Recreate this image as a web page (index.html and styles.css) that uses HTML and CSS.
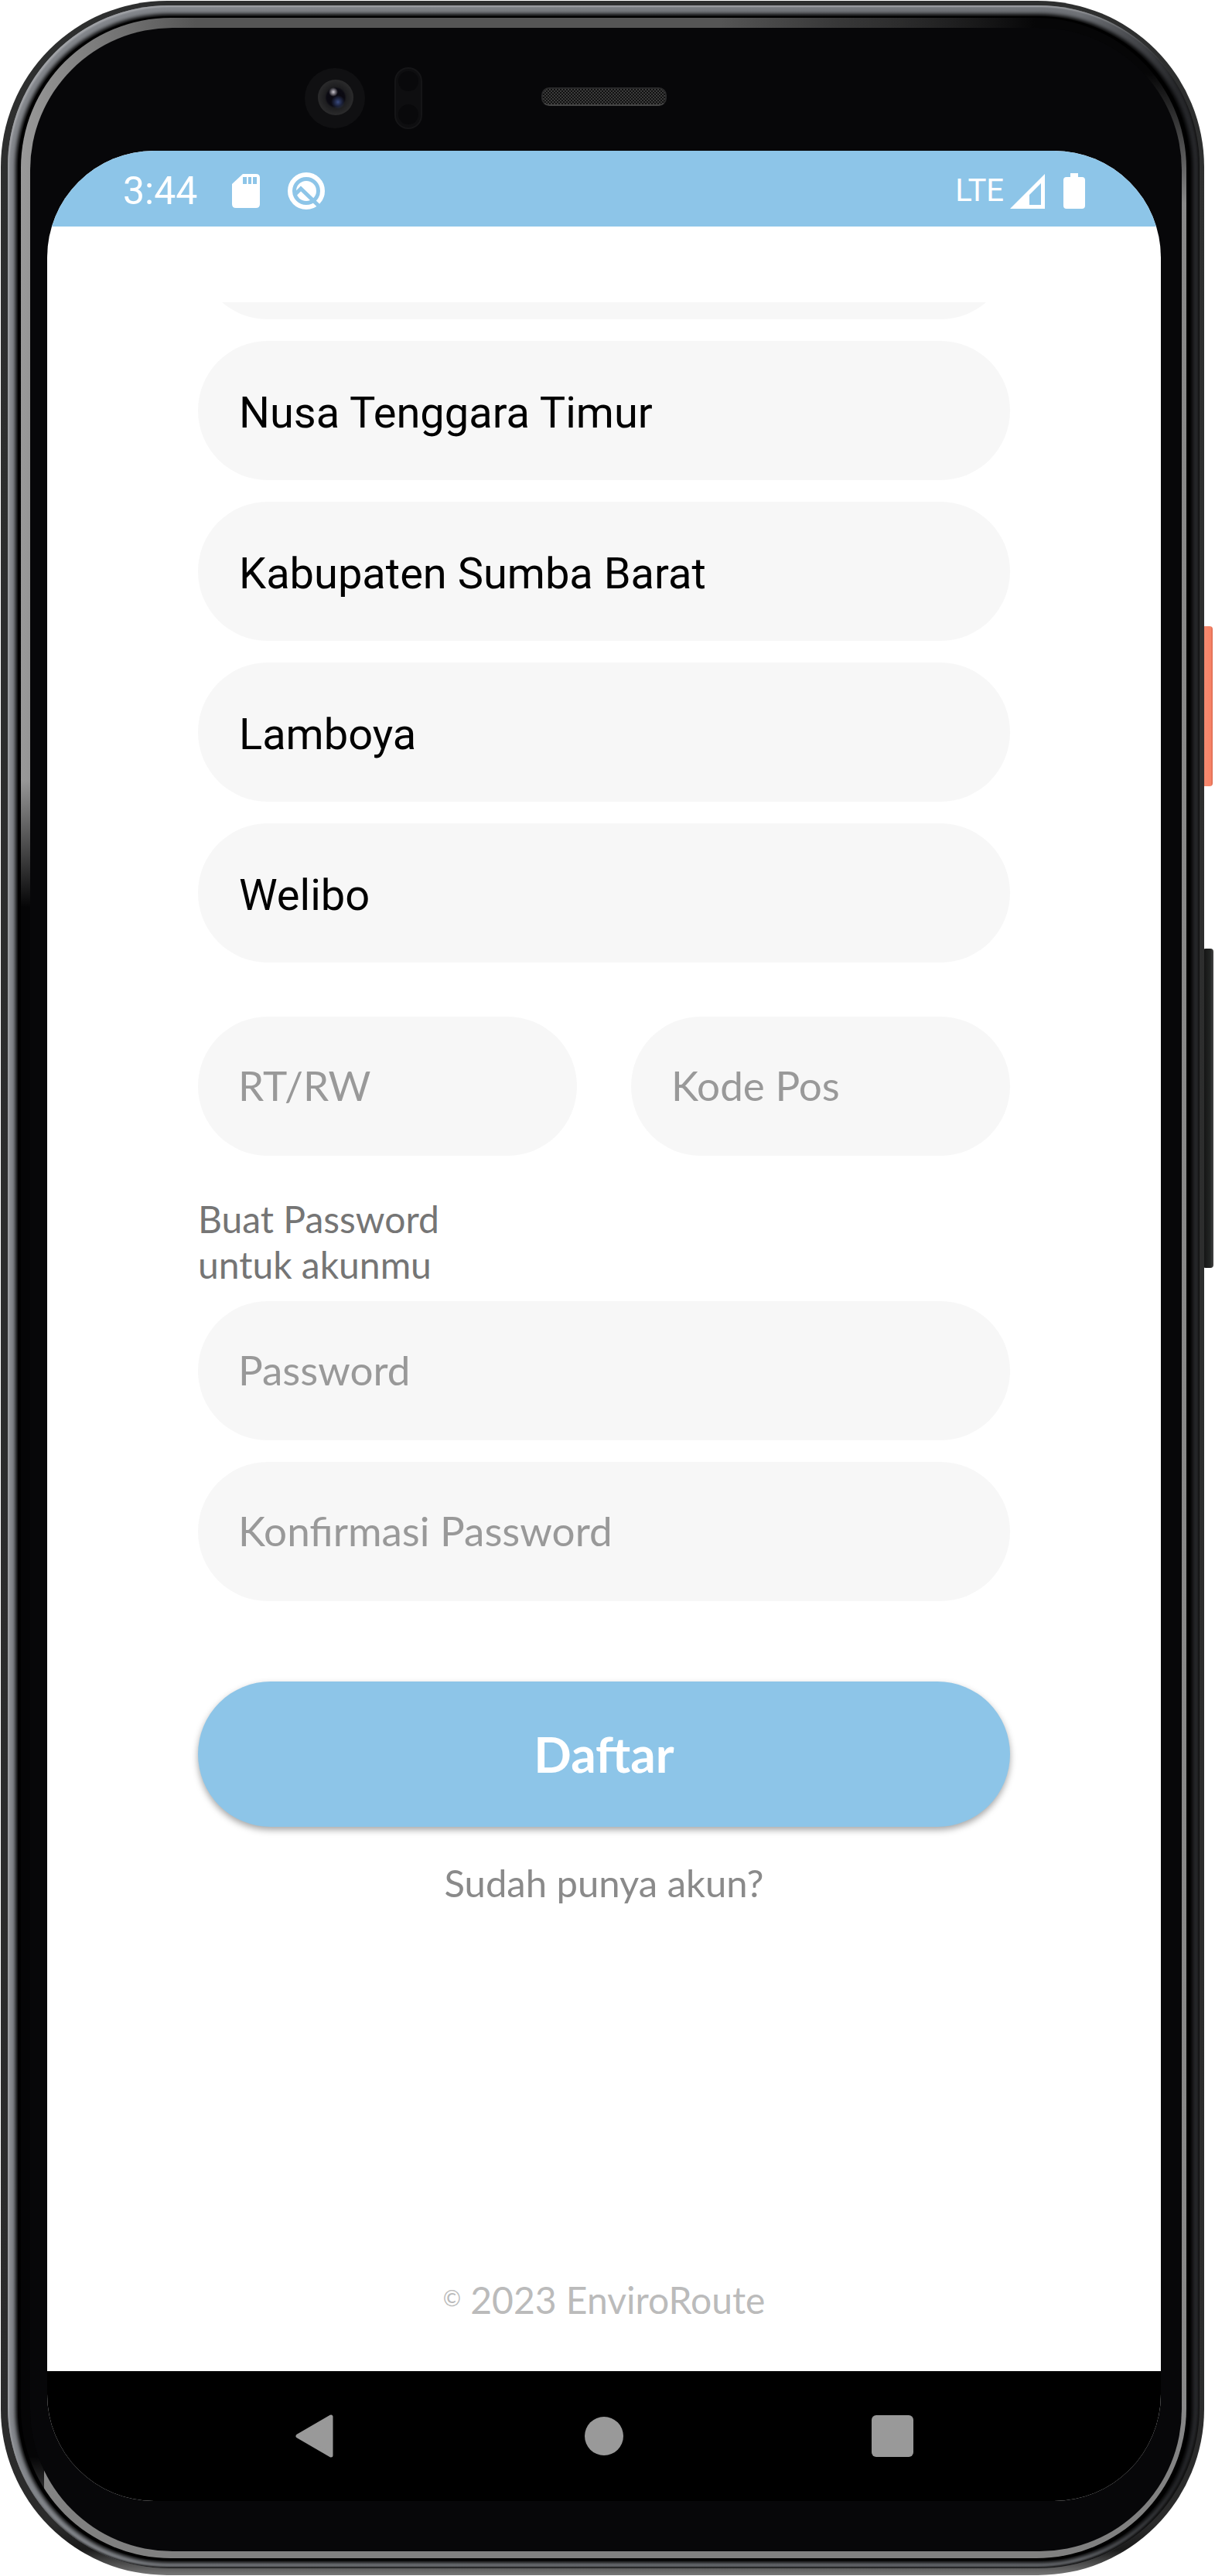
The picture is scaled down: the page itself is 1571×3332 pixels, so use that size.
FILE: index.html
```html
<!DOCTYPE html>
<html lang="id">
<head>
<meta charset="utf-8">
<title>EnviroRoute – Daftar</title>
<link rel="stylesheet" href="styles.css">
</head>
<body>
<div class="stage">
  <span class="side-key power"></span>
  <span class="side-key volume"></span>
  <div class="shell">
    <div class="rim">
      <div class="seam">
        <div class="bevel">
          <div class="bezel">
            <div class="sensors" aria-hidden="true">
              <svg class="camera" width="80" height="80" viewBox="0 0 80 80">
                <defs>
                  <radialGradient id="lens" cx="50%" cy="50%" r="50%">
                    <stop offset="0" stop-color="#0a0810"/>
                    <stop offset=".5" stop-color="#0b0a12"/>
                    <stop offset=".6" stop-color="#1d1d1f"/>
                    <stop offset="1" stop-color="#2b2b2c"/>
                  </radialGradient>
                  <radialGradient id="glint">
                    <stop offset="0" stop-color="#c9c5cd"/>
                    <stop offset="1" stop-color="#c9c5cd" stop-opacity="0"/>
                  </radialGradient>
                  <radialGradient id="flare">
                    <stop offset="0" stop-color="#3b4c80"/>
                    <stop offset="1" stop-color="#2f3f6e" stop-opacity="0"/>
                  </radialGradient>
                </defs>
                <circle cx="40" cy="40" r="39" fill="#101012"/>
                <circle cx="41" cy="39" r="23" fill="url(#lens)"/>
                <circle cx="44" cy="45" r="9" fill="url(#flare)"/>
                <circle cx="38" cy="32" r="6" fill="url(#glint)"/>
              </svg>
              <svg class="proximity" width="36" height="80" viewBox="0 0 36 80">
                <rect x="1" y="1" width="34" height="78" rx="17" fill="#0e0e10" stroke="#151517" stroke-width="2"/>
                <circle cx="18" cy="18" r="13" fill="#09090b"/>
                <circle cx="18" cy="61" r="13" fill="#09090b"/>
              </svg>
              <span class="speaker"></span>
            </div>
            <div class="screen">
              <header class="status">
                <div class="status-left">
                  <time>3:44</time>
                  <svg width="36" height="46" viewBox="0 0 36 46" fill="#fff"><path fill-rule="evenodd" d="M14 1H31Q36 1 36 6V40Q36 45 31 45H5Q0 45 0 40V14ZM14 5V14H19V5ZM21 5V14H25V5ZM27 5V14H32V5Z"/></svg>
                  <svg width="50" height="50" viewBox="0 0 50 50"><circle cx="25" cy="25" r="21" fill="none" stroke="#fff" stroke-width="6"/><circle cx="25" cy="25" r="13" fill="#fff"/><path d="M10 30 18 22 44 47" fill="none" stroke="#8dc5e8" stroke-width="5"/></svg>
                </div>
                <div class="status-right">
                  <span>LTE</span>
                  <svg width="45" height="45" viewBox="0 0 45 45" fill="#fff"><path fill-rule="evenodd" d="M45 0V45H0ZM40 12 25 27V40H40Z"/></svg>
                  <svg class="battery" width="28" height="46" viewBox="0 0 28 46" fill="#fff"><path d="M9 0H19V5H24Q28 5 28 9V42Q28 46 24 46H4Q0 46 0 42V9Q0 5 4 5H9Z"/></svg>
                </div>
              </header>
              <main class="page">
                <form class="form">
                  <input class="field clipped" aria-label="Alamat">
                  <select class="field" aria-label="Provinsi"><option>Nusa Tenggara Timur</option></select>
                  <select class="field" aria-label="Kabupaten"><option>Kabupaten Sumba Barat</option></select>
                  <select class="field" aria-label="Kecamatan"><option>Lamboya</option></select>
                  <select class="field" aria-label="Kelurahan"><option>Welibo</option></select>
                  <div class="pair">
                    <input class="field" placeholder="RT/RW" aria-label="RT/RW">
                    <input class="field" placeholder="Kode Pos" aria-label="Kode Pos">
                  </div>
                  <label class="hint" for="password">Buat Password<br>untuk akunmu</label>
                  <input class="field" id="password" type="password" placeholder="Password">
                  <input class="field" type="password" placeholder="Konfirmasi Password" aria-label="Konfirmasi Password">
                  <button class="submit" type="submit">Daftar</button>
                  <a class="login" href="#">Sudah punya akun?</a>
                </form>
                <footer class="copyright"><small>©</small> 2023 EnviroRoute</footer>
              </main>
              <nav class="navbar">
                <button aria-label="Kembali"><svg width="54" height="58" viewBox="0 0 54 58"><path d="M47 4V54L4 29Z" fill="#999" stroke="#999" stroke-width="5" stroke-linejoin="round"/></svg></button>
                <button aria-label="Beranda"><svg width="54" height="54" viewBox="0 0 54 54"><circle cx="27" cy="27" r="25" fill="#999"/></svg></button>
                <button aria-label="Ikhtisar"><svg width="54" height="54" viewBox="0 0 54 54"><rect width="54" height="54" rx="6" fill="#999"/></svg></button>
              </nav>
            </div>
          </div>
        </div>
      </div>
    </div>
  </div>
</div>
</body>
</html>
```

FILE: styles.css
```css
* { box-sizing: border-box; }

body {
  margin: 0;
  background: #fff;
  font-family: Lato, "Open Sans", sans-serif;
}

/* Device body */
.stage {
  position: relative;
  padding: 1px 14px 1px 1px;
}

.shell {
  position: relative;
  padding: 6px 6px 9px 9px;
  border-radius: 215px;
  background: linear-gradient(#2e2f2f, #2b2b2b 98%, #1a1a1a 99%, #777);
}

.rim {
  padding: 14px 12px 10px 13px;
  border-radius: 208px;
  background: linear-gradient(to right, #85888d, #6f7277 90%, #28292c 98%);
  box-shadow: inset -2px -2px 3px #111, inset 2px 2px 2px #a3a5a9;
}

.seam {
  padding: 2px 5px 3px 4px;
  border-radius: 196px;
  background: #000;
  box-shadow: 0 0 5px 3px #000;
}

/* Glass edge: lit at upper left, right side and bottom, dark elsewhere */
.bevel {
  padding: 13px 6px 9px 12px;
  border-radius: 194px;
  background:
    linear-gradient(to bottom, transparent 30%, #050506 35% 96%, transparent) left / 30px 100% no-repeat,
    linear-gradient(to bottom, #060607 30%, transparent) right top / 190px 240px no-repeat,
    linear-gradient(to right, transparent 60%, #060607 87%) left top / 100% 14px no-repeat,
    linear-gradient(to bottom, transparent, #808080 80%) left bottom / 100% 200px no-repeat,
    linear-gradient(to right, #999, #555 15% 70%, #888);
}

.bezel {
  padding: 159px 27px 65px 22px;
  border-radius: 184px;
  background: #070709;
}

.side-key {
  position: absolute;
  right: 2px;
  width: 14px;
  border-radius: 4px;
}

.power { top: 810px; height: 207px; right: 3px; background: linear-gradient(to right, #d0604a, #f58a70 30%, #f98468 80%, #d96a50); }
.volume { top: 1227px; height: 413px; background: linear-gradient(to right, #111, #232524 70%, #444); }

.sensors {
  position: absolute;
  top: 86px;
  left: 4px;
  right: 0;
  height: 80px;
  display: flex;
  justify-content: center;
}

.camera { position: absolute; left: 388px; top: 0; }
.proximity { position: absolute; left: 505px; top: 0; }

.speaker {
  width: 162px;
  height: 24px;
  margin-top: 26px;
  border: 2px solid #29292a;
  border-bottom-color: #444;
  border-radius: 10px;
  background: repeating-conic-gradient(#111 0 25%, #3c3c3c 0 50%) 0 0 / 4px 4px;
}

/* Screen */
.screen {
  overflow: hidden;
  border-radius: 138px;
  background: #fff;
}

.status {
  display: flex;
  justify-content: space-between;
  align-items: center;
  height: 98px;
  padding: 6px 98px 0 98px;
  background: #8dc5e8;
  color: #fff;
  font: 50px/58px Roboto, sans-serif;
}

.status svg { display: block; }
.status-left { display: flex; align-items: center; gap: 45px; }
.status-left svg + svg { margin-left: -10px; }
.status-right { display: flex; align-items: center; gap: 8px; font-size: 40px; }
.battery { margin-left: 16px; }

.page {
  display: flex;
  flex-direction: column;
  padding: 98px 195px 62px;
}

.form {
  display: flex;
  flex-direction: column;
  gap: 28px;
  overflow: hidden;
  margin: 0 -20px;
  padding: 0 20px 12px;
}

.field {
  display: block;
  width: 100%;
  height: 180px;
  padding: 0 52px 4px;
  border: 0;
  border-radius: 90px;
  outline: 0;
  background: #f7f7f7;
  color: #000;
  appearance: none;
  font: 53px/64px Lato, "Open Sans", sans-serif;
}

select.field { padding: 5px 53px 0; font-family: Roboto, sans-serif; font-size: 56px; }
.field::placeholder { color: #999; opacity: 1; }
.clipped { margin-top: -158px; flex: none; }

.pair {
  display: grid;
  grid-template-columns: 1fr 1fr;
  gap: 70px;
  margin-top: 42px;
}

.hint {
  margin: 24px 0 -10px;
  color: #757575;
  font-size: 48px;
  line-height: 59px;
}

.submit {
  height: 188px;
  margin-top: 76px;
  border: 0;
  border-radius: 94px;
  background: #8dc5e8;
  box-shadow: 0 4px 8px rgba(0, 0, 0, .35);
  color: #fff;
  font: bold 64px/72px Lato, "Open Sans", sans-serif;
}

.login {
  align-self: center;
  margin-top: 14px;
  color: #8a8a8a;
  font-size: 49px;
  line-height: 60px;
  text-decoration: none;
}

.copyright {
  margin-top: 468px;
  color: #bbb;
  font-size: 48px;
  line-height: 60px;
  text-align: center;
}

.copyright small { font-size: 28px; vertical-align: 10px; line-height: 1; }

.navbar {
  display: grid;
  grid-template-columns: repeat(3, 1fr);
  align-items: center;
  height: 168px;
  padding: 0 160px;
  background: #000;
}

.navbar button { display: flex; justify-content: center; padding: 0; border: 0; background: none; }
```
